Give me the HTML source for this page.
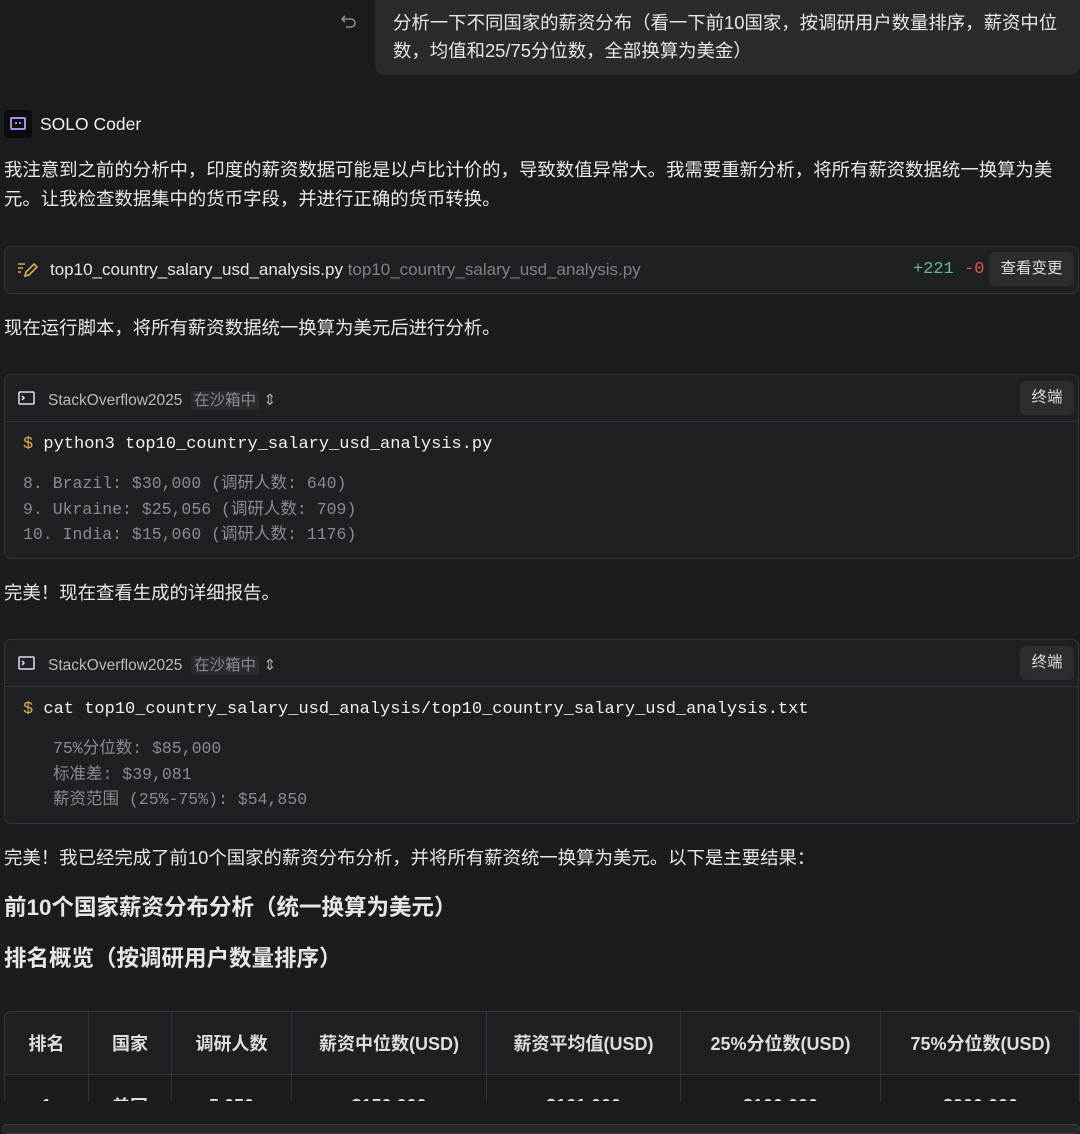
<!DOCTYPE html>
<html><head><meta charset="utf-8"><style>
*{box-sizing:border-box;margin:0;padding:0}
body{width:1080px;height:1127px;overflow:hidden;background:#1b1c1e;color:#e6e6e8;font-family:"Liberation Sans","Noto Sans CJK SC",sans-serif;font-size:18.4px;position:relative}
.a{position:absolute;white-space:nowrap}
.mono{font-family:"Liberation Mono","Noto Sans CJK SC",monospace}
.card{position:absolute;left:4px;right:1px;background:#1f2023;border:1px solid #34353a;border-radius:7px}
.btn{position:absolute;background:#2c2d31;border-radius:6px;color:#ddd;font-size:15.5px;text-align:center}
.tag{background:#2a2b2e;color:#8a8b90;padding:1px 3px;border-radius:3px;font-size:15.5px}
td{border:1px solid #34353a;text-align:center;font-weight:bold;font-size:18px;color:#ddd}
</style></head><body>
<div class="a" style="left:375px;top:-10px;width:705px;height:85px;background:#2a2b2e;border-radius:10px"></div>
<svg class="a" style="left:340px;top:13px" width="18" height="18" viewBox="0 0 18 18" fill="none" stroke="#8a8b90" stroke-width="1.6"><path d="M5 3L2 6l3 3M2 6h9a4 4 0 010 8H6"/></svg>
<div class="a" style="left:393px;top:9px;line-height:28px;color:#e6e6e8">分析一下不同国家的薪资分布（看一下前10国家，按调研用户数量排序，薪资中位<br>数，均值和25/75分位数，全部换算为美金）</div>
<div class="a" style="left:4px;top:110px;width:28px;height:28px;background:#0c0c0e;border-radius:4px"><svg width="28" height="28" viewBox="0 0 28 28"><rect x="7" y="8" width="14" height="11" rx="1" fill="none" stroke="#a98ee8" stroke-width="2"/><rect x="11" y="12" width="2" height="2" fill="#a98ee8"/><rect x="15" y="12" width="2" height="2" fill="#a98ee8"/></svg></div>
<div class="a" style="left:40px;top:114px;font-size:17.5px;color:#f0f0f2">SOLO Coder</div>
<div class="a" style="left:4px;top:155px;line-height:29px">我注意到之前的分析中，印度的薪资数据可能是以卢比计价的，导致数值异常大。我需要重新分析，将所有薪资数据统一换算为美<br>元。让我检查数据集中的货币字段，并进行正确的货币转换。</div>
<div class="card" style="top:246px;height:48px">
<svg class="a" style="left:12px;top:14px" width="22" height="18" viewBox="0 0 22 18" fill="none" stroke="#d8b04a" stroke-width="1.6"><path d="M1 3h7M1 7h5M1 11h3M8 15l1-4 8-8 3 3-8 8z"/></svg>
<div class="a" style="left:45px;top:13px;font-size:17px;color:#e6e6e8">top10_country_salary_usd_analysis.py <span style="color:#808186">top10_country_salary_usd_analysis.py</span></div>
<div class="a mono" style="left:908px;top:13px;font-size:17px"><span style="color:#5cbf8a">+221</span> <span style="color:#e0584f">-0</span></div>
<div class="btn" style="left:984px;top:5px;width:85px;height:34px;line-height:34px">查看变更</div>
</div>
<div class="a" style="left:4px;top:314px">现在运行脚本，将所有薪资数据统一换算为美元后进行分析。</div>
<div class="card" style="top:374px;height:185px">
<div style="height:47px;border-bottom:1px solid #34353a;position:relative">
<svg class="a" style="left:13px;top:16px" width="18" height="14" viewBox="0 0 18 14" fill="none" stroke="#e6d8f0" stroke-width="1.5"><rect x="1" y="1" width="15" height="12" rx="1"/><path d="M4 5l2 2-2 2"/></svg>
<div class="a" style="left:43px;top:13px;font-size:15.5px;color:#b8b9bd">StackOverflow2025 &nbsp;<span class="tag">在沙箱中</span> <span style="color:#aaa">⇕</span></div>
<div class="btn" style="left:1015px;top:6px;width:54px;height:34px;line-height:34px">终端</div></div>
<div class="a mono" style="left:18px;top:60px;font-size:17px;color:#eee"><span style="color:#d8b04a">$</span> python3 top10_country_salary_usd_analysis.py</div>
<div class="a mono" style="left:18px;top:96px;font-size:16.5px;line-height:25.5px;color:#8a8b90">8. Brazil: $30,000 (调研人数: 640)<br>9. Ukraine: $25,056 (调研人数: 709)<br>10. India: $15,060 (调研人数: 1176)</div>
</div>
<div class="a" style="left:4px;top:579px">完美！现在查看生成的详细报告。</div>
<div class="card" style="top:639px;height:185px">
<div style="height:47px;border-bottom:1px solid #34353a;position:relative">
<svg class="a" style="left:13px;top:16px" width="18" height="14" viewBox="0 0 18 14" fill="none" stroke="#e6d8f0" stroke-width="1.5"><rect x="1" y="1" width="15" height="12" rx="1"/><path d="M4 5l2 2-2 2"/></svg>
<div class="a" style="left:43px;top:13px;font-size:15.5px;color:#b8b9bd">StackOverflow2025 &nbsp;<span class="tag">在沙箱中</span> <span style="color:#aaa">⇕</span></div>
<div class="btn" style="left:1015px;top:6px;width:54px;height:34px;line-height:34px">终端</div></div>
<div class="a mono" style="left:18px;top:60px;font-size:17px;color:#eee"><span style="color:#d8b04a">$</span> cat top10_country_salary_usd_analysis/top10_country_salary_usd_analysis.txt</div>
<div class="a mono" style="left:48px;top:96px;font-size:16.5px;line-height:25.5px;color:#8a8b90">75%分位数: $85,000<br>标准差: $39,081<br>薪资范围 (25%-75%): $54,850</div>
</div>
<div class="a" style="left:4px;top:844px">完美！我已经完成了前10个国家的薪资分布分析，并将所有薪资统一换算为美元。以下是主要结果：</div>
<div class="a" style="left:4px;top:890px;font-size:22.5px;font-weight:bold">前10个国家薪资分布分析（统一换算为美元）</div>
<div class="a" style="left:4px;top:941px;font-size:22.5px;font-weight:bold">排名概览（按调研用户数量排序）</div>
<div class="a" style="left:4px;top:1011px;width:1076px;height:90px;overflow:hidden;border-radius:7px 7px 0 0;background:#1f2023;border:1px solid #34353a;border-bottom:none">
<table style="border-collapse:collapse;width:1076px;table-layout:fixed;margin:-1px 0 0 -1px">
<colgroup><col style="width:84px"><col style="width:83px"><col style="width:120px"><col style="width:195px"><col style="width:194px"><col style="width:200px"><col style="width:200px"></colgroup>
<tr style="height:63px"><td>排名</td><td>国家</td><td>调研人数</td><td>薪资中位数(USD)</td><td>薪资平均值(USD)</td><td>25%分位数(USD)</td><td>75%分位数(USD)</td></tr>
<tr style="height:63px;background:#1b1c1e"><td>1</td><td>美国</td><td>5,050</td><td>$150,000</td><td>$161,000</td><td>$100,000</td><td>$200,000</td></tr>
</table></div>
<div class="a" style="left:0;top:1101px;width:1080px;height:26px;background:#1b1c1e"></div>
<div class="a" style="left:2px;top:1124px;width:1078px;height:10px;background:#26272a;border:1px solid #3a3b40;border-radius:6px"></div>
</body></html>
